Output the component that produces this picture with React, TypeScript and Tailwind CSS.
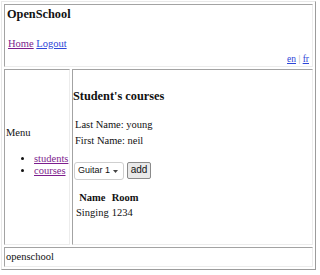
const serif = { fontFamily: '"Liberation Serif", "Times New Roman", serif' };

const cell =
  "border border-t-[#a3a3a3] border-l-[#a3a3a3] border-r-[#ececec] border-b-[#ececec]";

const App = () => {
  return (
    <div className="w-[320px] h-[275px] bg-white pt-[1px] pl-[1px]" style={serif}>
      <div className="w-[315px] h-[269px] border border-t-[#e8e8e8] border-l-[#e8e8e8] border-r-[#9c9c9c] border-b-[#9c9c9c] p-[2px] flex flex-col gap-[2px] text-[10.5px] text-[#111]">
        {/* header */}
        <div className={`${cell} h-[63px] px-[2px]`}>
          <h3 className="font-bold text-[12.3px] leading-[14px] mt-[2px]">OpenSchool</h3>
          <div className="mt-[17px] leading-[12px] pl-[1px]">
            <a className="underline text-[#7d1d8d]">Home</a>{" "}
            <a className="underline text-[#2c45d8]">Logout</a>
          </div>
          <div className="mt-[3px] leading-[12px] text-right text-[9.5px] pr-[1px]">
            <a className="underline text-[#2c45d8]">en</a>
            <span className="text-[#aaa]"> | </span>
            <a className="underline text-[#2c45d8]">fr</a>
          </div>
        </div>

        {/* middle */}
        <div className="flex gap-[2px] h-[176px]">
          <div className={`${cell} w-[66px] flex flex-col justify-center px-[1px]`}>
            <div className="leading-[12px]">Menu</div>
            <ul className="list-disc pl-[28px] mt-[14px] mb-[10px] leading-[12px]">
              <li>
                <a className="underline text-[#7d1d8d]">students</a>
              </li>
              <li>
                <a className="underline text-[#7d1d8d]">courses</a>
              </li>
            </ul>
          </div>
          <div className={`${cell} flex-1 pt-[19px]`}>
            <h3 className="font-bold text-[12.3px] leading-[14px]">Student's courses</h3>
            <div className="ml-[2px] mt-[16px] leading-[12px]">Last Name: young</div>
            <div className="ml-[2px] mt-[4px] leading-[12px]">First Name: neil</div>
            <div className="mt-[15px] ml-[1px] flex items-center gap-[3px]">
              <div
                className="w-[50px] h-[18px] border border-[#cfcfcf] rounded-[3px] bg-white flex items-center justify-between pl-[3px] pr-[5px] text-[9px]"
                style={{ fontFamily: '"Liberation Sans", Arial, sans-serif' }}
              >
                <span>Guitar 1</span>
                <svg width="5" height="3" viewBox="0 0 5 3">
                  <path d="M0 0 L5 0 L2.5 3 Z" fill="#444" />
                </svg>
              </div>
              <button
                className="w-[24px] h-[17px] -mt-[2px] border border-[#8a8a8a] rounded-[2px] bg-[#e9e9e9] text-[10px] leading-[14px]"
                style={{ fontFamily: '"Liberation Sans", Arial, sans-serif' }}
              >
                add
              </button>
            </div>
            <div className="mt-[12px] ml-[3px] grid grid-cols-[auto_auto] w-fit gap-x-[3px] gap-y-[3px] leading-[12px]">
              <div className="font-bold text-center">Name</div>
              <div className="font-bold text-center">Room</div>
              <div>Singing</div>
              <div>1234</div>
            </div>
          </div>
        </div>

        {/* footer */}
        <div className={`${cell} flex-1 flex items-center px-[1px]`}>
          <div className="leading-[12px]">openschool</div>
        </div>
      </div>
    </div>
  );
};

export default App;
